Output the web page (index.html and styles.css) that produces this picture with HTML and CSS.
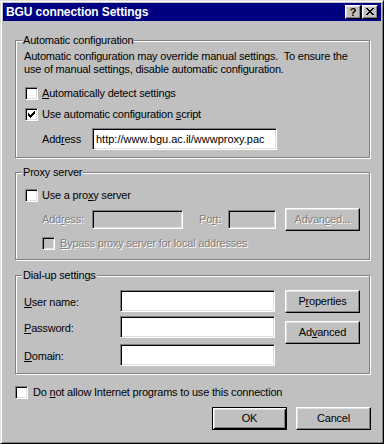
FILE: index.html
```html
<!DOCTYPE html>
<html>
<head>
<meta charset="utf-8">
<title>BGU connection Settings</title>
<link rel="stylesheet" href="styles.css">
</head>
<body>
<div class="window">
  <div class="titlebar">
    <span class="title">BGU connection Settings</span>
    <span class="tb-btn help">?</span>
    <span class="tb-btn close"><svg width="8" height="7" viewBox="0 0 8 7" shape-rendering="crispEdges"><g fill="#000"><rect x="0" y="0" width="2" height="1"/><rect x="6" y="0" width="2" height="1"/><rect x="1" y="1" width="2" height="1"/><rect x="5" y="1" width="2" height="1"/><rect x="2" y="2" width="4" height="1"/><rect x="3" y="3" width="2" height="1"/><rect x="2" y="4" width="4" height="1"/><rect x="1" y="5" width="2" height="1"/><rect x="5" y="5" width="2" height="1"/><rect x="0" y="6" width="2" height="1"/><rect x="6" y="6" width="2" height="1"/></g></svg></span>
  </div>
  <div class="content">
    <div class="group g1">
      <span class="legend">Automatic configuration</span>
      <p class="desc">Automatic configuration may override manual settings.&nbsp; To ensure the<br>use of manual settings, disable automatic configuration.</p>
      <div class="check-row r1"><span class="cb"></span><span><u>A</u>utomatically detect settings</span></div>
      <div class="check-row r2"><span class="cb"><svg class="tick" width="7" height="7" viewBox="0 0 7 7" shape-rendering="crispEdges"><g fill="#000"><rect x="0" y="2" width="1" height="3"/><rect x="1" y="3" width="1" height="3"/><rect x="2" y="4" width="1" height="3"/><rect x="3" y="3" width="1" height="3"/><rect x="4" y="2" width="1" height="3"/><rect x="5" y="1" width="1" height="3"/><rect x="6" y="0" width="1" height="3"/></g></svg></span><span>Use automatic configuration <u>s</u>cript</span></div>
      <div class="addr-row"><span class="lbl-addr">Add<u>r</u>ess</span><span class="edit edit-url">http://www.bgu.ac.il/wwwproxy.pac</span></div>
    </div>

    <div class="group g2">
      <span class="legend">Proxy server</span>
      <div class="check-row r3"><span class="cb"></span><span>Use a pro<u>x</u>y server</span></div>
      <div class="proxy-row">
        <span class="lbl-addr disabled">Add<u>r</u>ess:</span>
        <span class="edit edit-off edit-proxy"></span>
        <span class="lbl-port disabled">Po<u>r</u>t:</span>
        <span class="edit edit-off edit-port"></span>
        <span class="btn btn-adv1"><span class="disabled">Advan<u>c</u>ed...</span></span>
      </div>
      <div class="check-row r4"><span class="cb cb-off"></span><span class="disabled"><u>B</u>ypass proxy server for local addresses</span></div>
    </div>

    <div class="group g3">
      <span class="legend">Dial-up settings</span>
      <div class="dial-left">
        <div class="dial-row"><span class="lbl-dial"><u>U</u>ser name:</span><span class="edit edit-dial"></span></div>
        <div class="dial-row dr2"><span class="lbl-dial"><u>P</u>assword:</span><span class="edit edit-dial"></span></div>
        <div class="dial-row dr3"><span class="lbl-dial"><u>D</u>omain:</span><span class="edit edit-dial"></span></div>
      </div>
      <div class="dial-right">
        <span class="btn">P<u>r</u>operties</span>
        <span class="btn btn-adv2">Ad<u>v</u>anced</span>
      </div>
    </div>

    <div class="check-row bottom-check"><span class="cb"></span><span>Do <u>n</u>ot allow Internet programs to use this connection</span></div>

    <div class="actions">
      <span class="btn btn-default">OK</span>
      <span class="btn">Cancel</span>
    </div>
  </div>
</div>
</body>
</html>
```
FILE: styles.css
```css
* { box-sizing: border-box; }
html, body { margin: 0; padding: 0; }
body {
  width: 384px;
  height: 444px;
  overflow: hidden;
  background: #c0c0c0;
  font-family: "Liberation Sans", Arial, sans-serif;
  font-size: 11px;
  line-height: 13px;
  letter-spacing: -0.2px;
  color: #000;
}
u { text-decoration: underline; text-underline-offset: 1px; }

.window {
  width: 384px;
  height: 444px;
  background: #c0c0c0;
  border: 1px solid;
  border-color: #dfdfdf #000 #000 #dfdfdf;
  box-shadow: inset 1px 1px #fff, inset -1px -1px #808080;
  padding: 2px;
  display: flex;
  flex-direction: column;
}

.titlebar {
  height: 18px;
  flex: none;
  background: #000080;
  display: flex;
  align-items: center;
  padding: 0 3px 0 2px;
}
.title {
  flex: 1;
  color: #fff;
  font-weight: bold;
  font-size: 12px;
  line-height: 14px;
  letter-spacing: -0.1px;
  white-space: nowrap;
  padding-left: 1px;
}
.tb-btn {
  width: 16px;
  height: 14px;
  flex: none;
  background: #c0c0c0;
  border: 1px solid;
  border-color: #fff #000 #000 #fff;
  box-shadow: inset -1px -1px #808080, inset 1px 1px #dfdfdf;
}
.help {
  font-weight: bold;
  font-size: 11px;
  line-height: 12px;
  letter-spacing: 0;
  text-align: center;
}
.close {
  margin-left: 1px;
  padding: 2px 0 0 3px;
}
.close svg { display: block; }

.content {
  flex: 1;
  padding: 19px 11px 0 12px;
}

.group {
  position: relative;
  border: 1px solid #808080;
  box-shadow: inset 1px 1px #fff, 1px 1px #fff;
}
.legend {
  position: absolute;
  top: -7px;
  left: 6px;
  padding: 0 1px;
  background: #c0c0c0;
  line-height: 13px;
  white-space: nowrap;
}

.g1 { padding: 9px 8px 7px 8px; }
.g2 { margin-top: 14px; padding: 16px 8px 9px 8px; }
.g3 { margin-top: 15px; padding: 14px 8px 7px 8px; display: flex; }

.desc { margin: 0; white-space: nowrap; }

.check-row {
  display: flex;
  align-items: center;
  height: 13px;
  white-space: nowrap;
}
.cb {
  width: 13px;
  height: 13px;
  flex: none;
  background: #fff;
  border: 1px solid;
  border-color: #808080 #fff #fff #808080;
  box-shadow: inset 1px 1px #000, inset -1px -1px #dfdfdf;
  margin-right: 4px;
  display: flex;
  align-items: center;
  justify-content: center;
}
.cb-off { background: #c0c0c0; }
.tick { display: block; }

.r1 { margin-top: 11px; margin-left: 1px; }
.r2 { margin-top: 8px; margin-left: 1px; }
.r3 { margin-left: 1px; }
.r4 { margin-top: 6px; margin-left: 18px; }
.r4 .cb { margin-right: 5px; }

.addr-row {
  margin-top: 7px;
  padding-left: 18px;
  display: flex;
  align-items: center;
  height: 22px;
}
.lbl-addr { width: 50px; flex: none; }

.edit {
  display: block;
  flex: none;
  height: 22px;
  background: #fff;
  border: 1px solid;
  border-color: #808080 #fff #fff #808080;
  box-shadow: inset 1px 1px #000, inset -1px -1px #dfdfdf;
  padding: 0 3px;
  line-height: 20px;
  letter-spacing: 0;
  white-space: nowrap;
  overflow: hidden;
}
.edit-url { width: 185px; }
.edit-off { background: #c0c0c0; height: 19px; }
.edit-proxy { width: 91px; }
.edit-port { width: 48px; }
.edit-dial { width: 155px; }

.proxy-row {
  margin-top: 6px;
  padding-left: 18px;
  display: flex;
  align-items: center;
  height: 23px;
}
.lbl-port { margin-left: 16px; width: 29px; flex: none; }
.btn-adv1 { margin-left: 9px; }

.disabled {
  color: #808080;
  text-shadow: 1px 1px 0 #fff;
}

.btn {
  display: flex;
  align-items: center;
  justify-content: center;
  flex: none;
  width: 75px;
  height: 23px;
  background: #c0c0c0;
  border: 1px solid;
  border-color: #fff #000 #000 #fff;
  box-shadow: inset -1px -1px #808080, inset 1px 1px #dfdfdf;
  white-space: nowrap;
}
.btn-default {
  border-color: #000;
  box-shadow: inset 1px 1px #fff, inset -1px -1px #000, inset 2px 2px #dfdfdf, inset -2px -2px #808080;
}

.dial-left { display: flex; flex-direction: column; }
.dial-row { display: flex; align-items: center; height: 22px; }
.dr2 { margin-top: 4px; }
.dr3 { margin-top: 6px; }
.lbl-dial { width: 96px; flex: none; padding-top: 2px; }
.dial-right { margin-left: 10px; display: flex; flex-direction: column; }
.btn-adv2 { margin-top: 8px; }

.bottom-check { margin-top: 12px; }
.bottom-check .cb { margin-right: 5px; }

.actions {
  display: flex;
  justify-content: flex-end;
  gap: 9px;
  margin-top: 8px;
  margin-right: -1px;
}
```
